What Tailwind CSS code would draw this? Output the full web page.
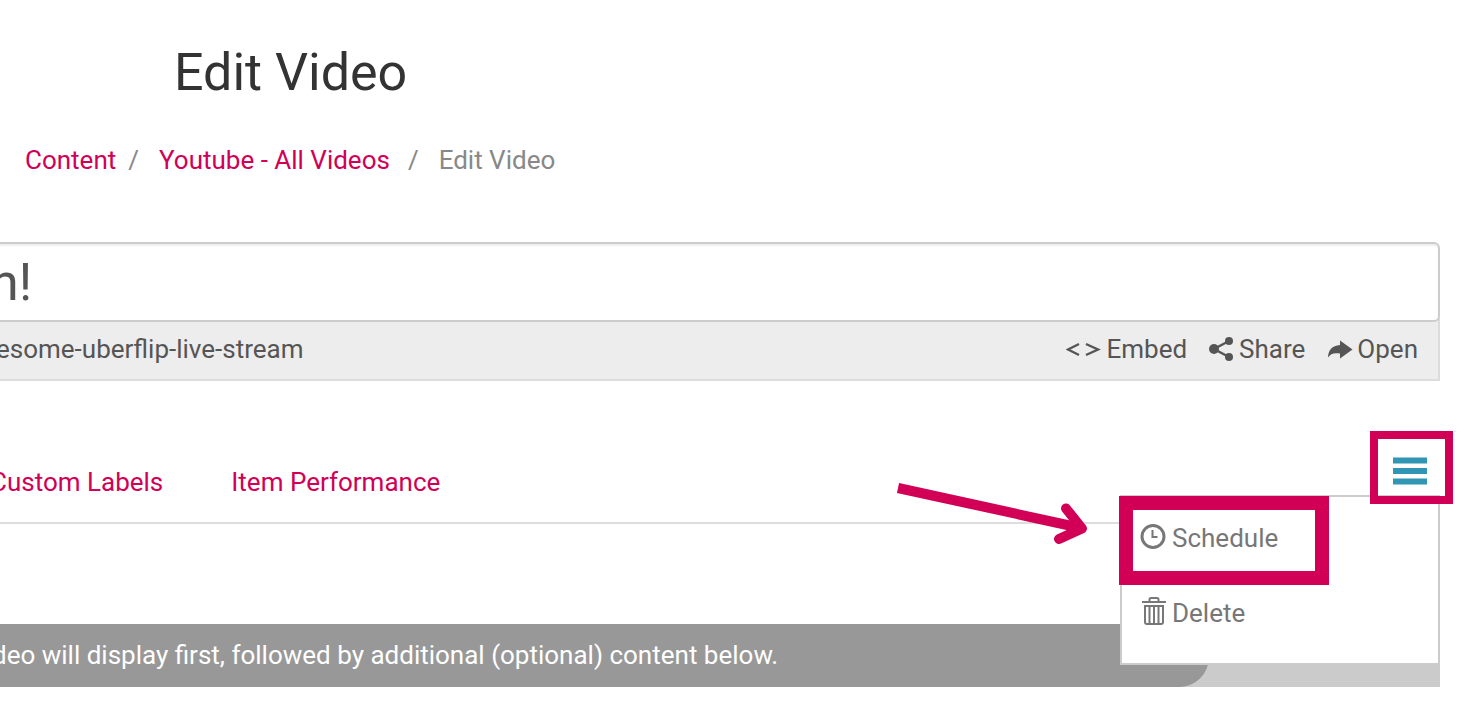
<!DOCTYPE html>
<html lang="en">
<head>
    <meta charset="UTF-8">
    <meta name="viewport" content="width=device-width, initial-scale=1.0">
    <title>Edit Video</title>
    <script src="https://cdn.jsdelivr.net/npm/@tailwindcss/browser@4"></script>
</head>
<body class="bg-white overflow-x-hidden font-['Roboto',sans-serif] text-[26px] leading-8 text-[#555]">
    <header class="pt-[43px]">
        <h1 class="pl-[174px] text-[52px] leading-[60px] text-[#333]">Edit Video</h1>
        <nav aria-label="Breadcrumb" class="mt-[41px] pl-[25px]">
            <ol class="flex text-[#888]">
                <li><a href="#" class="text-[#d10056]">Content</a></li>
                <li aria-hidden="true" class="pl-3 pr-5">/</li>
                <li><a href="#" class="text-[#d10056]">Youtube - All Videos</a></li>
                <li aria-hidden="true" class="pl-[18px] pr-5">/</li>
                <li>Edit Video</li>
            </ol>
        </nav>
    </header>

    <main class="mt-[66px] mr-8">
        <!-- Title and address of the item -->
        <section class="-ml-10">
            <input type="text" aria-label="Title" value="n!" class="relative z-10 block w-full h-20 pl-7 bg-white border-2 border-[#ccc] rounded-md text-[52px] text-[#555] shadow-[inset_0_2px_2px_#eee]">
            <div class="-mt-1 pt-[15px] pb-[14px] pl-9 pr-5 flex justify-between bg-[#ededed] border-r-2 border-b-2 border-[#dcdcdc]">
                <span>esome-uberflip-live-stream</span>
                <div class="flex gap-[22px]">
                    <button type="button" class="flex items-center gap-1">
                        <svg class="w-9 h-6" viewBox="0 0 36 24" fill="none" stroke="currentColor" stroke-width="2.4"><path d="M13 7L2 12.500L13 18M20 7L32 12.500L20 18"/></svg>
                        Embed
                    </button>
                    <button type="button" class="flex items-center gap-1">
                        <svg class="w-[26px] h-6" viewBox="0 0 26 24" fill="currentColor"><path d="M20 4L5 12L20 20" fill="none" stroke="currentColor" stroke-width="2.4"/><circle cx="5" cy="12" r="5"/><circle cx="20" cy="4" r="4"/><circle cx="20" cy="20" r="4"/></svg>
                        Share
                    </button>
                    <button type="button" class="flex items-center gap-1">
                        <svg class="w-[26px] h-6" viewBox="0 0 26 24" fill="currentColor"><path d="M13 3.500L25.500 12.500L13 21.500V16.500C7 15.500 3.500 16.500 1 20.500C1 13.500 5 8.500 13 8Z"/></svg>
                        Open
                    </button>
                </div>
            </div>
        </section>

        <div class="relative">
            <div class="mt-[76px] h-[67px] -ml-[10px] flex items-start justify-between border-b-2 border-[#ddd]">
                <nav class="flex gap-[68px] pt-[9px] text-[#d10056]">
                    <a href="#">Custom Labels</a>
                    <a href="#">Item Performance</a>
                </nav>
                <button type="button" aria-label="Menu" class="mr-3">
                    <svg class="w-9 h-7" viewBox="0 0 36 28" fill="#3096b4"><path d="M1 0.500H35V6.500H1ZM1 11H35V17H1ZM1 21.500H35V27.500H1Z"/></svg>
                </button>
            </div>

            <!-- Open menu -->
            <ul class="absolute z-10 right-0 top-[38px] w-80 h-[170px] pl-[18px] pt-[25px] flex flex-col gap-[43px] bg-white border-2 border-[#ccc] text-[#777]">
                <li>
                    <button type="button" class="flex items-center gap-[6px]">
                        <svg class="w-[26px] h-7" viewBox="0 0 26 28" fill="none" stroke="currentColor"><circle cx="13" cy="12.500" r="11" stroke-width="3"/><path d="M12.500 6V13H17.500" stroke-width="2"/></svg>
                        Schedule
                    </button>
                </li>
                <li>
                    <button type="button" class="flex items-center gap-[6px]">
                        <svg class="w-[26px] h-7" viewBox="0 0 26 28" fill="none" stroke="currentColor" stroke-width="2" overflow="visible"><path d="M2 3H26M9.500 2.500V0.500Q9.500 -1 11 -1H17Q18.500 -1 18.500 0.500V2.500M5 7H23V23Q23 25 21 25H7Q5 25 5 23Z"/><path d="M9.500 7V25M14 7V25M18.500 7V25"/></svg>
                        Delete
                    </button>
                </li>
            </ul>

            <!-- Callouts drawn over the page -->
            <div class="absolute z-20 right-[111px] top-[39px] w-[210px] h-[89px] border-[14px] border-[#d10056] pointer-events-none"></div>
            <div class="absolute z-20 -right-[13px] -top-[26px] w-[83px] h-[73px] border-8 border-[#d10056] pointer-events-none"></div>
            <svg class="absolute z-20 right-[350px] top-[23px] w-[196px] h-[68px] pointer-events-none" viewBox="0 0 196 68" fill="none" stroke="#d10056" stroke-width="10"><path d="M4 8L187 48"/><path d="M172 28.500L188 48.500L165 59" stroke-linecap="round" stroke-linejoin="round"/></svg>
        </div>

        <section class="mt-[100px] bg-[#cbcbcb]">
            <p class="mr-[231px] pt-[15px] pb-4 bg-[#989898] text-white rounded-br-[30px]"><span class="-ml-2">deo will display first, followed by additional (optional) content below.</span></p>
        </section>
    </main>
</body>
</html>
